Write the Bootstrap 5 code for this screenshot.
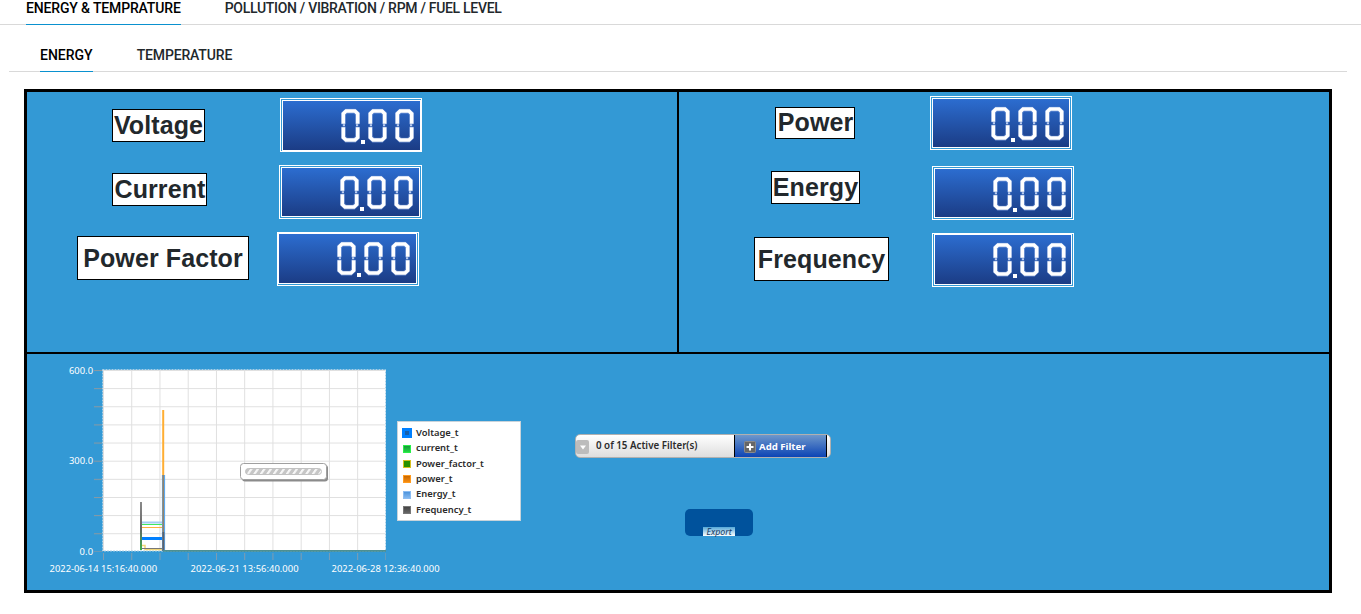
<!DOCTYPE html>
<html lang="en">
<head>
<meta charset="utf-8">
<meta name="viewport" content="width=device-width, initial-scale=1">
<title>Energy dashboard</title>
<link href="https://cdn.jsdelivr.net/npm/bootstrap@5.3.0/dist/css/bootstrap.min.css" rel="stylesheet">
<style>
body{font-family:Roboto,"Liberation Sans",sans-serif;background:#fff;overflow:hidden;height:614px}
.tabs-line{border-bottom:1px solid #d9d9d9;font-size:14px;font-weight:500;line-height:17px;flex-wrap:nowrap;gap:44px}
.tabs-line .nav-link{padding:0;color:#22282c;white-space:nowrap;margin-bottom:-1px;border-bottom:1px solid transparent}
.tabs-line .nav-link.active{color:#000;border-color:#0a91cf}
.tabs-main{height:25px;padding-left:26px;letter-spacing:-.3px}
.tabs-main .nav-link{height:25px}
.tabs-main .active{letter-spacing:-.15px}
.tabs-sub{margin:0 14px 0 9px;height:47px;padding-left:31px}
.tabs-sub .nav-link{height:47px;padding-top:22px;letter-spacing:-.15px}
.tabs-sub .nav-link.active{letter-spacing:0}
.board{margin:17px 0 0 24px;width:1308px;height:504px;border:3px solid #000;background:#3399d5}
.upper{height:262px;border-bottom:2px solid #000}
.cell-l{width:652px;border-right:2px solid #000}
.col-labels{width:250px}
.cell-r .col-labels{width:251px}
.tag{border:1px solid #000;background:#fff;color:#22282c;font:bold 25px/1 "Liberation Sans",Arial,sans-serif;letter-spacing:.1px;display:flex;align-items:center;justify-content:center;white-space:nowrap}
.readout{width:142px;height:54px;border:3px double #fff;background:linear-gradient(#2c6dd0,#1b3c85) padding-box}
.readout svg{display:block}
.t-volt{margin:17px 0 0 85px;width:93px;height:33px;padding-bottom:1px}
.t-curr{margin:31px 0 0 85px;width:95px;height:33px;padding:0 0 1px 1px}
.t-fact{margin:30px 0 0 50px;width:172px;height:44px}
.t-pow{margin:15px 0 0 96px;width:80px;height:32px;padding:0 0 1px 1px}
.t-ener{margin:32px 0 0 92px;width:89px;height:33px;padding-bottom:1px}
.t-freq{margin:33px 0 0 75px;width:135px;height:44px}
.r-volt{margin:6px 0 0 3px;border-right-style:solid;border-bottom-style:solid;border-right-width:2px;border-bottom-width:2px}
.r-curr{margin:13px 0 0 2px;width:143px}
.r-fact{margin:13px 0 0;border-left-style:solid;border-top-style:solid;border-left-width:2px;border-top-width:2px}
.r-pow{margin:4px 0 0}
.r-ener{margin:16px 0 0 2px}
.r-freq{margin:13px 0 0 2px;border-top-style:solid;border-top-width:2px}
.plot{width:370px;height:236px;overflow:visible;flex:none}
.plot text{font:9.4px "Noto Sans",sans-serif;fill:#fff}
.legend-box{margin:67px 0 0;width:124px;height:100px;background:#fff;border:1px solid #c9d3da;padding:3px 0 0 4px;font:600 9.4px/15.35px "Noto Sans",sans-serif;color:#2b2b2b}
.key{width:8px;height:8px;margin:1px 5px 0 1px;border:1px solid var(--edge);background:var(--fill)}
.key-on{width:10px;height:10px;margin:1px 4px 0 0;border-width:3px}
.actions{margin:80px 0 0 54px;width:256px;font-family:"Noto Sans",sans-serif}
.filter-bar{height:24px;border:1px solid #b0b0b0;border-radius:5px;background:linear-gradient(#fff,#dedede);font-size:9.75px;font-weight:600;color:#2b2b2b;overflow:hidden}
.filter-drop{width:13px;height:14px;background:#bcbcbc;border-radius:2px;flex:none;margin-top:1px}
.filter-text{margin-left:7px;width:138px;white-space:nowrap}
.filter-add{width:93px;height:22px;border:0;border-left:1px solid #000;border-right:1px solid #000;background:linear-gradient(#6d97cb,#0c44b5);color:#fff;font-size:9.6px;font-weight:700;padding:2px 0 0 9px;gap:3px}
.export-btn{margin:51px 0 0 110px;width:68px;height:27px;background:#00529c;border-radius:5px;border:0;padding:0}
.export-btn span{width:32px;height:9px;background:linear-gradient(#55a8d8,#fff);color:#173a63;font:italic 8.8px/10px "Noto Sans",sans-serif}
</style>
</head>
<body>
<svg width="0" height="0" class="position-absolute" aria-hidden="true">
  <defs>
    <g id="zero" fill="none">
      <path stroke="#7d9fdc" stroke-opacity=".55" stroke-width="5" d="M2.500 15.500V5L5.500 2.500H13.500L16.500 5V15.500M2.500 18V28.500L5.500 31.500H13.500L16.500 28.500V18"/>
      <path stroke="#fff" stroke-width="3.600" d="M2.300 15V5L5 2.300H14L16.700 5V15M2.300 18.600V28.800L5 31.300H14L16.700 28.800V18.600"/>
      <path stroke="#b9ccf0" stroke-width="2" d="M1.800 16.500H4M15 16.500H17.200"/>
    </g>
    <g id="digits"><use href="#zero" x="58" y="7.700"/><use href="#zero" x="85" y="7.700"/><use href="#zero" x="112" y="7.700"/><rect x="78" y="39" width="4" height="4" fill="#fff"/></g>
    <pattern id="grid" x="103" y="370" width="28.240" height="18.140" patternUnits="userSpaceOnUse"><path d="M0 .5H28.240M.5 0V18.140" stroke="#dfdfdf" fill="none"/></pattern>
    <pattern id="ticksY" x="94" y="370" width="9" height="18.140" patternUnits="userSpaceOnUse"><path d="M0 .5H9" stroke="#8a99a3"/></pattern>
    <pattern id="ticksX" x="103" y="553" width="28.240" height="7" patternUnits="userSpaceOnUse"><path d="M.5 0V7" stroke="#7e9cb0"/></pattern>
    <pattern id="stripes" width="6.500" height="20" patternUnits="userSpaceOnUse" patternTransform="skewX(-35)"><rect width="6.500" height="20" fill="#c6c6c6"/><rect width="2.600" height="20" fill="#f6f6f6"/></pattern>
    <linearGradient id="spike" x1="0" y1="0" x2="0" y2="1"><stop offset="0" stop-color="#8a8a8a"/><stop offset=".55" stop-color="#666"/><stop offset="1" stop-color="#3fae4b"/></linearGradient>
  </defs>
</svg>

<nav class="nav tabs-line tabs-main">
  <a class="nav-link active" href="#">ENERGY &amp; TEMPRATURE</a>
  <a class="nav-link" href="#">POLLUTION / VIBRATION / RPM / FUEL LEVEL</a>
</nav>
<nav class="nav tabs-line tabs-sub">
  <a class="nav-link active" href="#">ENERGY</a>
  <a class="nav-link" href="#">TEMPERATURE</a>
</nav>

<main class="board">
  <section class="upper d-flex">
    <div class="cell-l d-flex">
      <div class="col-labels">
        <div class="tag t-volt">Voltage</div>
        <div class="tag t-curr">Current</div>
        <div class="tag t-fact">Power Factor</div>
      </div>
      <div>
        <div class="readout r-volt"><svg width="136" height="48" role="img" aria-label="0.00"><use href="#digits"/></svg></div>
        <div class="readout r-curr"><svg width="136" height="48" role="img" aria-label="0.00"><use href="#digits"/></svg></div>
        <div class="readout r-fact"><svg width="136" height="48" role="img" aria-label="0.00"><use href="#digits"/></svg></div>
      </div>
    </div>
    <div class="cell-r d-flex">
      <div class="col-labels">
        <div class="tag t-pow">Power</div>
        <div class="tag t-ener">Energy</div>
        <div class="tag t-freq">Frequency</div>
      </div>
      <div>
        <div class="readout r-pow"><svg width="136" height="48" role="img" aria-label="0.00"><use href="#digits"/></svg></div>
        <div class="readout r-ener"><svg width="136" height="48" role="img" aria-label="0.00"><use href="#digits"/></svg></div>
        <div class="readout r-freq"><svg width="136" height="48" role="img" aria-label="0.00"><use href="#digits"/></svg></div>
      </div>
    </div>
  </section>

  <section class="d-flex align-items-start">
    <svg class="plot" viewBox="27 354 370 236">
      <rect x="103" y="370" width="283" height="181" fill="#fff"/>
      <rect x="103" y="370" width="282" height="181" fill="url(#grid)"/>
      <rect x="102.500" y="369.500" width="283" height="181.500" fill="none" stroke="#a9cfe6" stroke-dasharray="2 1"/>
      <rect x="94" y="370" width="8" height="182" fill="url(#ticksY)"/>
      <rect x="103" y="553" width="283" height="7" fill="url(#ticksX)"/>
      <!-- series -->
      <path d="M142 522.500H163" stroke="#a5cdf5" stroke-width="2"/>
      <path d="M142 524.500H163" stroke="#3fe860"/>
      <path d="M142 527.500H163" stroke="#ffb13d"/>
      <path d="M142 538.500H163" stroke="#0080ff" stroke-width="3"/>
      <path d="M141.500 545.500H145V549.500H163" stroke="#f2d675" stroke-width="1.500" fill="none"/>
      <path d="M142 548.500H163" stroke="#777"/>
      <path d="M163.200 410V476" stroke="#ffae33" stroke-width="2"/>
      <path d="M163.500 475V551" stroke="#5ca8ee" stroke-width="3.200"/>
      <path d="M163.200 475V532" stroke="#94846a" stroke-width="1.600"/>
      <path d="M163.300 532V551" stroke="#5f6268" stroke-width="2"/>
      <rect x="140" y="502" width="2" height="48" fill="url(#spike)"/>
      <path d="M163 550.800H386" stroke="#4d8f91" stroke-width="1.800"/>
      <!-- loading indicator -->
      <rect x="242" y="465" width="86" height="16.500" rx="3" fill="#8b8b8b"/>
      <rect x="240.500" y="463.500" width="86" height="16" rx="3" fill="#fff" stroke="#a0a0a0"/>
      <rect x="245.500" y="468.500" width="76" height="6" rx="3" fill="url(#stripes)" stroke="#c2c2c2"/>
      <text x="69" y="374" textLength="24">600.0</text>
      <text x="69" y="464.300" textLength="24">300.0</text>
      <text x="79.500" y="555" textLength="13.500">0.0</text>
      <text x="49.500" y="572" textLength="107.500">2022-06-14 15:16:40.000</text>
      <text x="190.500" y="572" textLength="108">2022-06-21 13:56:40.000</text>
      <text x="331.500" y="572" textLength="108">2022-06-28 12:36:40.000</text>
    </svg>

    <div class="legend-box">
      <div class="d-flex align-items-center"><i class="key key-on" style="--edge:#0080ff;--fill:#1660ad"></i>Voltage_t</div>
      <div class="d-flex align-items-center"><i class="key" style="--edge:#2aee4a;--fill:linear-gradient(#159a38,#22d842)"></i>current_t</div>
      <div class="d-flex align-items-center"><i class="key" style="--edge:#d6c020;--fill:#289000"></i>Power_factor_t</div>
      <div class="d-flex align-items-center"><i class="key" style="--edge:#ff9a1e;--fill:linear-gradient(#c96800,#f58c10)"></i>power_t</div>
      <div class="d-flex align-items-center"><i class="key" style="--edge:#8bbcf2;--fill:linear-gradient(#4d94dc,#83b8f0)"></i>Energy_t</div>
      <div class="d-flex align-items-center"><i class="key" style="--edge:#777;--fill:linear-gradient(#444,#666)"></i>Frequency_t</div>
    </div>

    <div class="actions">
      <div class="filter-bar d-flex align-items-center">
        <span class="filter-drop"><svg class="d-block" width="13" height="14"><path d="M4 5.500H10L7 9.500Z" fill="#fff"/></svg></span>
        <span class="filter-text">0 of 15 Active Filter(s)</span>
        <button class="filter-add d-flex align-items-center" type="button">
          <svg width="12" height="12"><rect x=".5" y=".5" width="11" height="11" rx="1" fill="#666" stroke="#8a8a8a"/><path d="M6 2.500V9.500M2.500 6H9.500" stroke="#fff" stroke-width="2"/></svg>Add Filter
        </button>
      </div>
      <button class="export-btn d-flex align-items-end justify-content-center" type="button"><span>Export</span></button>
    </div>
  </section>
</main>
<script src="https://cdn.jsdelivr.net/npm/bootstrap@5.3.0/dist/js/bootstrap.bundle.min.js"></script>
</body>
</html>
